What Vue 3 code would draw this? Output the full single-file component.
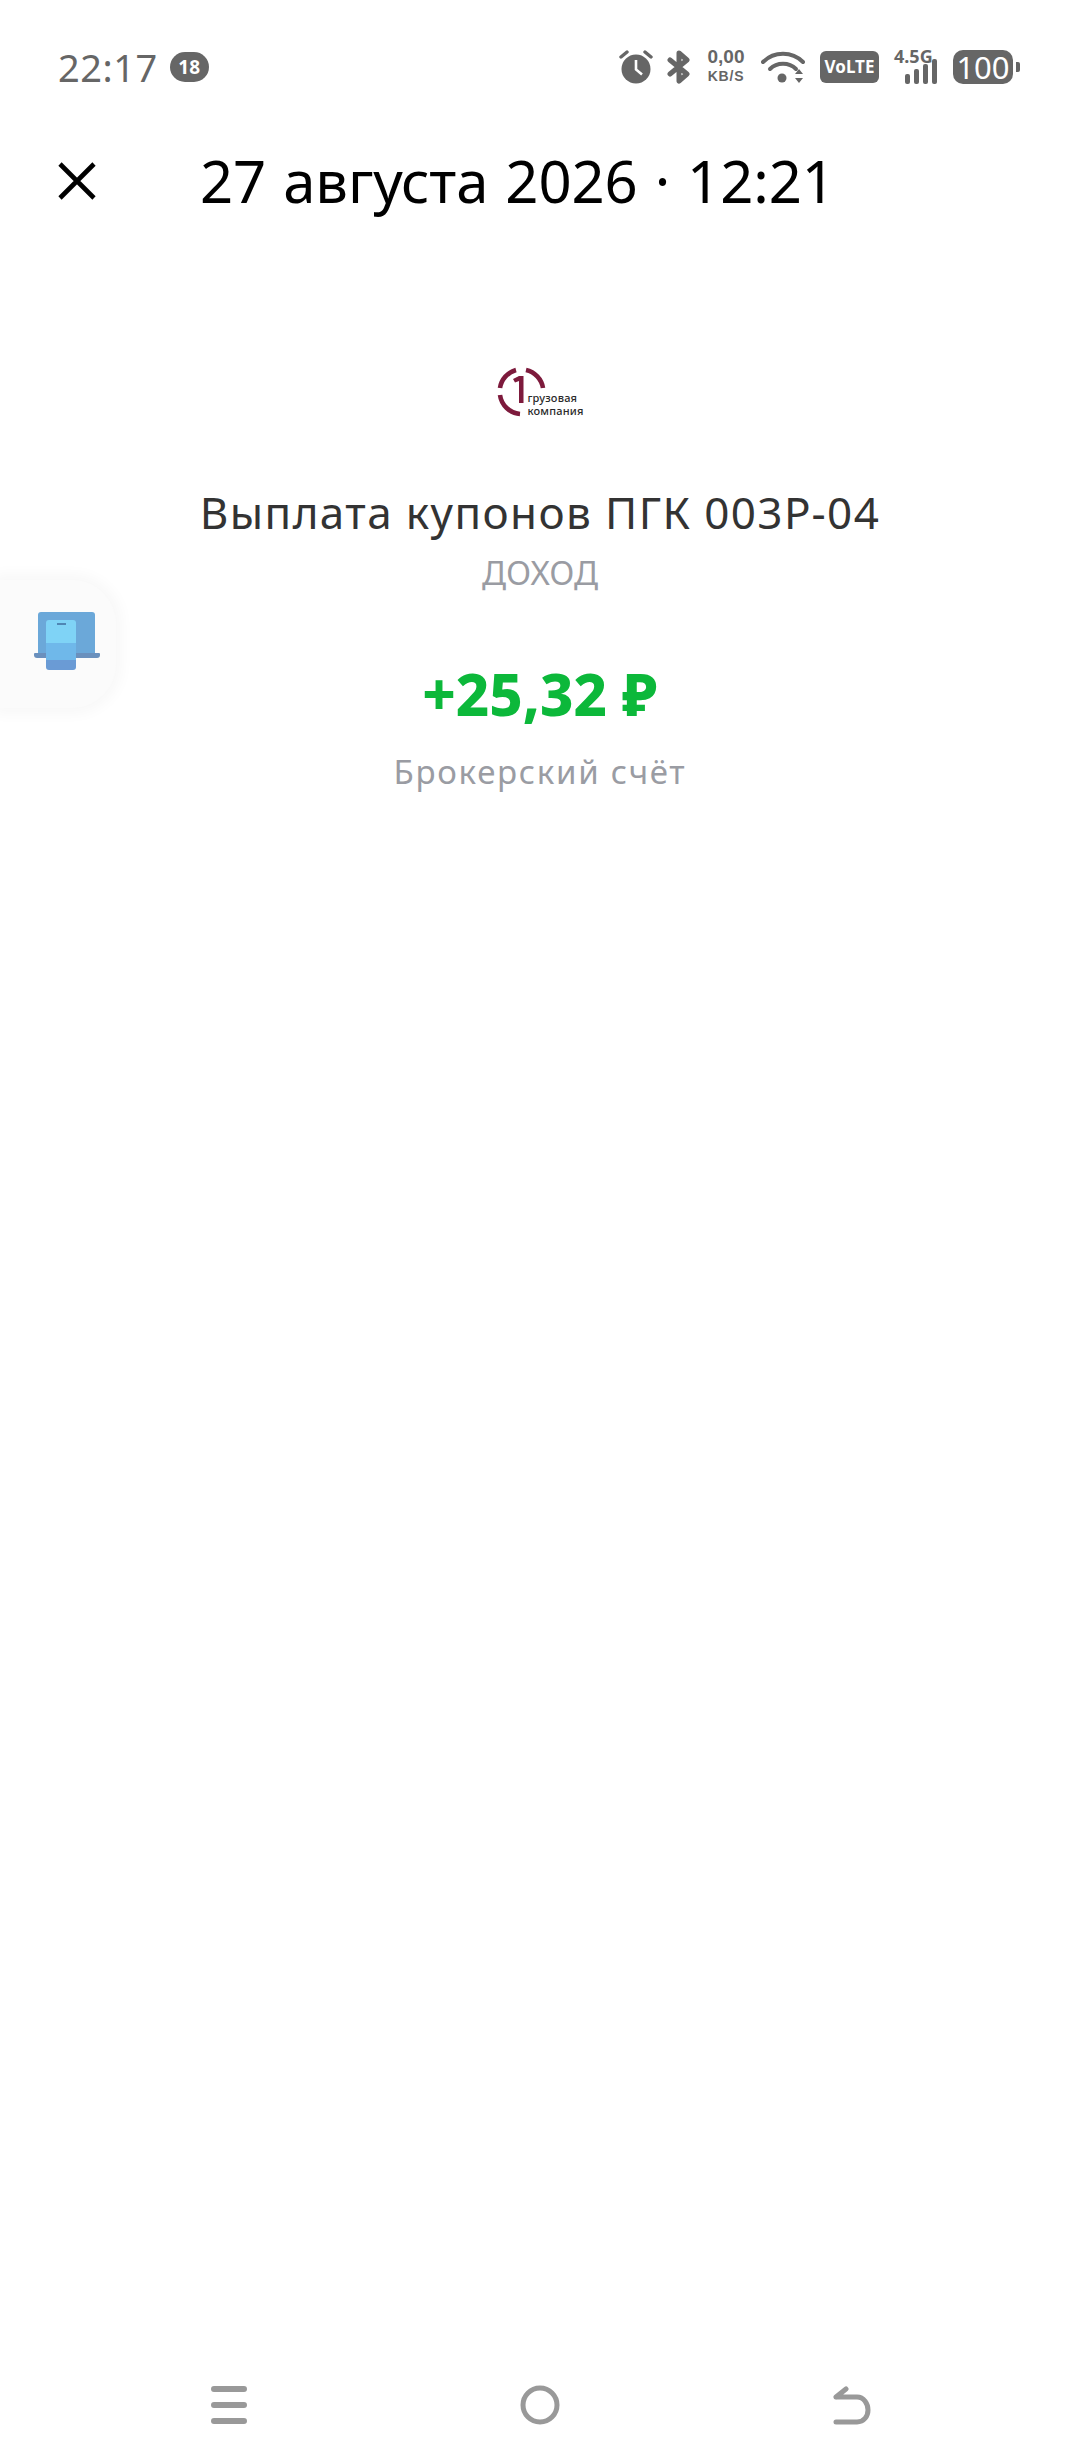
<template>
  <div class="screen">
    <!-- STATUS BAR -->
    <div class="status-bar">
      <div class="status-left">
        <span class="time">22:17</span>
        <span class="badge">18</span>
      </div>
      <div class="status-right">
        <svg class="ic-alarm" width="34" height="34" viewBox="0 0 34 34">
          <circle cx="17" cy="19" r="14.5" fill="#666" />
          <path d="M17 10v9.5l6 5" fill="none" stroke="#fff" stroke-width="2.6" />
          <path d="M2 7l6-5M32 7l-6-5" fill="none" stroke="#666" stroke-width="3.4" stroke-linecap="round" />
        </svg>
        <svg class="ic-bt" width="24" height="34" viewBox="0 0 24 34">
          <path d="M3 10l17 14-8 7V3l8 7-17 14" fill="none" stroke="#666" stroke-width="5" stroke-linejoin="round" stroke-linecap="round" />
        </svg>
        <div class="speed">
          <span class="speed-num">0,00</span>
          <span class="speed-unit">KB/S</span>
        </div>
        <svg class="ic-wifi" width="44" height="34" viewBox="0 0 44 34">
          <path d="M2 12c11-11 29-11 40 0" fill="none" stroke="#666" stroke-width="4" stroke-linecap="round" />
          <path d="M9 19c7-7 19-7 26 0" fill="none" stroke="#666" stroke-width="4" stroke-linecap="round" />
          <circle cx="21" cy="28" r="4.5" fill="#666" />
          <path d="M34 24l4-5 4 5zM34 28h8l-4 5z" fill="#666" />
        </svg>
        <span class="volte">VoLTE</span>
        <div class="signal">
          <span class="net">4.5G</span>
          <div class="bars">
            <i v-for="h in barHeights" :key="h" :style="{ height: h + 'px' }"></i>
          </div>
        </div>
        <div class="battery">
          <span class="battery-body">100</span>
          <span class="battery-tip"></span>
        </div>
      </div>
    </div>

    <!-- HEADER -->
    <div class="header">
      <svg class="close" width="38" height="38" viewBox="0 0 38 38">
        <path d="M2 2l34 34M36 2L2 36" stroke="#000" stroke-width="4.6" />
      </svg>
      <h1>27 августа 2026 · 12:21</h1>
    </div>

    <!-- OPERATION -->
    <div class="operation">
      <div class="logo">
        <svg width="50" height="50" viewBox="0 0 50 50">
          <g fill="none" stroke="#7d1a3c" stroke-width="4.600">
            <path d="M3 21A22 22 0 0 1 19 3" />
            <path d="M29 3A22 22 0 0 1 46 21" />
            <path d="M3 28A22 22 0 0 0 23 47" />
          </g>
          <path d="M16 12l6-3h4.500v27h-4.500V14l-4 1.500z" fill="#7d1a3c" />
        </svg>
        <div class="logo-text">
          <span>грузовая</span>
          <span>компания</span>
        </div>
      </div>

      <div class="title">Выплата купонов ПГК 003Р-04</div>
      <div class="category">ДОХОД</div>
      <div class="amount">+25,32 ₽</div>
      <div class="account">Брокерский счёт</div>
    </div>

    <!-- NAV BAR -->
    <div class="nav">
      <svg width="36" height="40" viewBox="0 0 36 40">
        <path d="M3 4h30M3 20h30M3 36h30" stroke="#999" stroke-width="6" stroke-linecap="round" />
      </svg>
      <svg width="40" height="40" viewBox="0 0 40 40">
        <circle cx="20" cy="20" r="17" fill="none" stroke="#999" stroke-width="5" />
      </svg>
      <svg width="38" height="40" viewBox="0 0 38 40">
        <path d="M3 37h21c7 0 11-6 11-12s-4-13-11-13H3M3 12l10-8" fill="none" stroke="#999" stroke-width="5" stroke-linecap="round" />
      </svg>
    </div>

    <!-- side handle over the page -->
    <div class="handle">
      <div class="laptop"></div>
      <div class="laptop-base"></div>
      <div class="phone"><span></span></div>
    </div>
  </div>
</template>

<script setup>
const barHeights = [10, 15, 20, 25]
</script>

<style scoped>
.screen {
  position: relative;
  width: 1080px;
  height: 2460px;
  background: #fff;
  font-family: "Noto Sans", sans-serif;
  display: flex;
  flex-direction: column;
  overflow: hidden;
}

.status-bar {
  padding: 50px 60px 0 58px;
  height: 34px;
  display: flex;
  justify-content: space-between;
  align-items: center;
  color: #666;
}

.status-left {
  display: flex;
  align-items: center;
  gap: 12px;
}

.time {
  font-size: 38px;
  line-height: 34px;
  letter-spacing: 0.5px;
}

.badge {
  width: 39px;
  height: 30px;
  border-radius: 15px;
  background: #666;
  color: #fff;
  font-size: 19px;
  font-weight: 700;
  line-height: 30px;
  text-align: center;
}

.status-right {
  display: flex;
  align-items: center;
}

.ic-alarm {
  margin-right: 14px;
}

.ic-bt {
  margin-right: 13px;
}

.speed {
  width: 44px;
  display: flex;
  flex-direction: column;
  align-items: center;
  font-family: "Liberation Sans", sans-serif;
  font-weight: 700;
  margin: -3px 13px 0 0;
}

.speed-num {
  font-size: 19px;
  line-height: 22px;
}

.speed-unit {
  font-size: 14px;
  line-height: 17px;
  letter-spacing: 0.8px;
}

.ic-wifi {
  margin-right: 15px;
}

.volte {
  width: 59px;
  height: 32px;
  border-radius: 6px;
  background: #666;
  color: #fff;
  font-size: 17px;
  font-weight: 700;
  line-height: 32px;
  text-align: center;
  margin-right: 15px;
}

.signal {
  position: relative;
  width: 43px;
  height: 34px;
  margin-right: 16px;
}

.net {
  position: absolute;
  left: 0;
  top: -4px;
  font-size: 18px;
  font-weight: 700;
  line-height: 20px;
}

.bars {
  position: absolute;
  right: 0;
  bottom: 0;
  display: flex;
  align-items: flex-end;
  gap: 4px;
}

.bars i {
  display: block;
  width: 5px;
  border-radius: 2px;
  background: #666;
}

.battery {
  display: flex;
  align-items: center;
  gap: 3px;
}

.battery-body {
  width: 60px;
  height: 34px;
  border-radius: 10px;
  background: #666;
  color: #fff;
  font-size: 31px;
  line-height: 34px;
  text-align: center;
}

.battery-tip {
  width: 4px;
  height: 10px;
  border-radius: 0 2px 2px 0;
  background: #666;
}

.header {
  display: flex;
  align-items: center;
  padding: 67px 0 0 58px;
}

.close {
  margin-right: 104px;
}

h1 {
  margin: 0;
  font-size: 58px;
  font-weight: 400;
  line-height: 60px;
  color: #000;
  word-spacing: 2px;
  letter-spacing: -0.1px;
}

.operation {
  flex: 1;
  display: flex;
  flex-direction: column;
  align-items: center;
  padding-top: 156px;
}

.logo {
  display: flex;
  align-items: flex-end;
  height: 50px;
  margin-left: 1px;
}

.logo-text {
  display: flex;
  flex-direction: column;
  margin-left: -20px;
  color: #2a2a2a;
  font-size: 11px;
  font-weight: 500;
  line-height: 13px;
  letter-spacing: 0.2px;
}

.title {
  margin-top: 67px;
  font-size: 44px;
  line-height: 56px;
  color: #333;
  letter-spacing: 1.4px;
}

.category {
  margin-top: 11px;
  font-size: 33px;
  line-height: 44px;
  color: #9a9ca3;
}

.amount {
  margin-top: 64px;
  font-size: 58px;
  font-weight: 800;
  line-height: 70px;
  color: #0cb83a;
}

.account {
  margin-top: 21px;
  font-size: 33px;
  line-height: 44px;
  color: #9a9ca3;
  letter-spacing: 1.7px;
}

.nav {
  display: flex;
  justify-content: space-between;
  align-items: center;
  padding: 0 209px 35px 211px;
}

.handle {
  position: absolute;
  left: 0;
  top: 580px;
  width: 116px;
  height: 128px;
  background: #fbfbfb;
  border-radius: 0 44px 44px 0;
  box-shadow: 0 0 14px 6px rgba(0, 0, 0, 0.03);
}

.laptop {
  position: absolute;
  left: 38px;
  top: 32px;
  width: 57px;
  height: 42px;
  border-radius: 3px 3px 0 0;
  background: #6ba8d9;
}

.laptop-base {
  position: absolute;
  left: 34px;
  top: 73px;
  width: 66px;
  height: 5px;
  border-radius: 1px 1px 3px 3px;
  background: #6a90bd;
}

.phone {
  position: absolute;
  left: 46px;
  top: 40px;
  width: 30px;
  height: 50px;
  border-radius: 3px;
  background: linear-gradient(#7fd3f6 0 45%, #6fb8ea 45% 80%, #6a9bd5 80%);
}

.phone span {
  display: block;
  width: 9px;
  height: 2px;
  margin: 3px auto 0;
  background: #4f86b4;
}
</style>
